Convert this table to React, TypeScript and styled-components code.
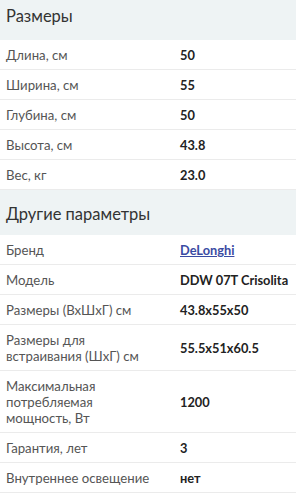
import React from "react";
import styled, { createGlobalStyle } from "styled-components";

const Global = createGlobalStyle`
  html, body { margin: 0; padding: 0; background: #fff; }
  body { font-family: Lato, "Noto Sans", sans-serif; -webkit-font-smoothing: antialiased; }
`;

const Page = styled.div`
  width: 296px;
  display: flex;
  flex-direction: column;
`;

const Header = styled.div<{ $first?: boolean }>`
  background: #eef3f4;
  height: ${(p) => (p.$first ? "40px" : "45px")};
  box-sizing: border-box;
  padding: ${(p) => (p.$first ? "0 6px 9px" : "2px 6px 0")};
  display: flex;
  align-items: center;
  font-size: 16.5px;
  color: #333;
  font-weight: 400;
`;

const Row = styled.div`
  display: grid;
  grid-template-columns: 174px 1fr;
  align-items: center;
  padding: 7px 6px 6px;
  line-height: 16px;
  border-bottom: 1px solid #ebebeb;
  font-size: 13.2px;
`;

const Label = styled.div`
  color: #555;
`;

const Value = styled.div`
  color: #222;
  font-weight: 700;
  font-size: 12.8px;
  white-space: nowrap;
`;

const Link = styled.a`
  color: #3a4ba3;
  text-decoration: underline;
  font-weight: 700;
`;

type Item = { label: React.ReactNode; value: React.ReactNode };

const sizes: Item[] = [
  { label: "Длина, см", value: "50" },
  { label: "Ширина, см", value: "55" },
  { label: "Глубина, см", value: "50" },
  { label: "Высота, см", value: "43.8" },
  { label: "Вес, кг", value: "23.0" },
];

const other: Item[] = [
  { label: "Бренд", value: <Link href="#">DeLonghi</Link> },
  { label: "Модель", value: "DDW 07T Crisolita" },
  { label: "Размеры (ВхШхГ) см", value: "43.8x55x50" },
  {
    label: (
      <>
        Размеры для
        <br />
        встраивания (ШхГ) см
      </>
    ),
    value: "55.5x51x60.5",
  },
  {
    label: (
      <>
        Максимальная
        <br />
        потребляемая
        <br />
        мощность, Вт
      </>
    ),
    value: "1200",
  },
  { label: "Гарантия, лет", value: "3" },
  { label: "Внутреннее освещение", value: "нет" },
];

export default function App() {
  return (
    <>
      <Global />
      <Page>
        <Header $first>Размеры</Header>
        {sizes.map((it, i) => (
          <Row key={i}>
            <Label>{it.label}</Label>
            <Value>{it.value}</Value>
          </Row>
        ))}
        <Header>Другие параметры</Header>
        {other.map((it, i) => (
          <Row key={i}>
            <Label>{it.label}</Label>
            <Value>{it.value}</Value>
          </Row>
        ))}
      </Page>
    </>
  );
}
